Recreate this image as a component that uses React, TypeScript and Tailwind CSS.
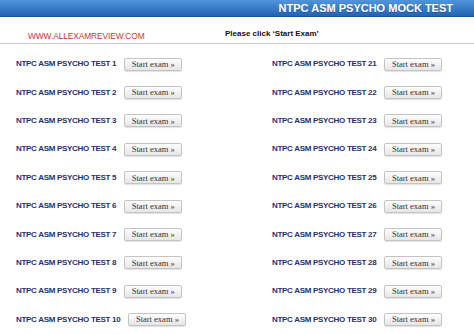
import React from "react";

function Row({ n }: { n: number }) {
  return (
    <div className="flex h-[28.4px] items-center gap-[8px]">
      <span className="text-[8px] font-bold leading-none tracking-[-0.3px] text-[#2a2f6c] whitespace-nowrap">
        NTPC ASM PSYCHO TEST {n}
      </span>
      <button
        className="flex h-[13px] w-[58px] items-center justify-center rounded-[2px] border border-[#c4c4c4] bg-gradient-to-b from-[#fdfdfd] to-[#e6e6e6] text-[8.5px] leading-none text-[#333] shadow-[0_1px_1px_rgba(0,0,0,0.12)] whitespace-nowrap"
        style={{ fontFamily: '"Liberation Serif", "Times New Roman", serif' }}
      >
        Start exam »
      </button>
    </div>
  );
}

export default function App() {
  const left = Array.from({ length: 10 }, (_, i) => i + 1);
  const right = Array.from({ length: 10 }, (_, i) => i + 21);
  return (
    <div
      className="h-[334px] w-[474px] overflow-hidden bg-white leading-none"
      style={{ fontFamily: '"Liberation Sans", Arial, sans-serif' }}
    >
      <div className="flex h-[17px] items-center justify-end border-b border-[#1a4f93] bg-gradient-to-b from-[#4f95dc] to-[#2463b2] pr-[21px]">
        <span className="text-[11px] font-bold leading-none text-white [text-shadow:0_1px_0_rgba(0,0,0,0.25)]">
          NTPC ASM PSYCHO MOCK TEST
        </span>
      </div>
      <div className="flex h-[26px] text-[0px]">
        <div className="w-[225px] pl-[28px] pt-[15px]">
          <div className="text-[8.4px] leading-none tracking-[-0.1px] text-[#cc3340]">
            WWW.ALLEXAMREVIEW.COM
          </div>
        </div>
        <div className="pt-[13px]">
          <div className="text-[8px] font-bold leading-none text-[#111]">
            Please click ‘Start Exam’
          </div>
        </div>
      </div>
      <div className="h-px bg-[#cdcdcd]" />
      <div className="flex pt-[6px]">
        <div className="w-[272px] pl-[16px]">
          {left.map((n) => (
            <Row key={n} n={n} />
          ))}
        </div>
        <div>
          {right.map((n) => (
            <Row key={n} n={n} />
          ))}
        </div>
      </div>
    </div>
  );
}
